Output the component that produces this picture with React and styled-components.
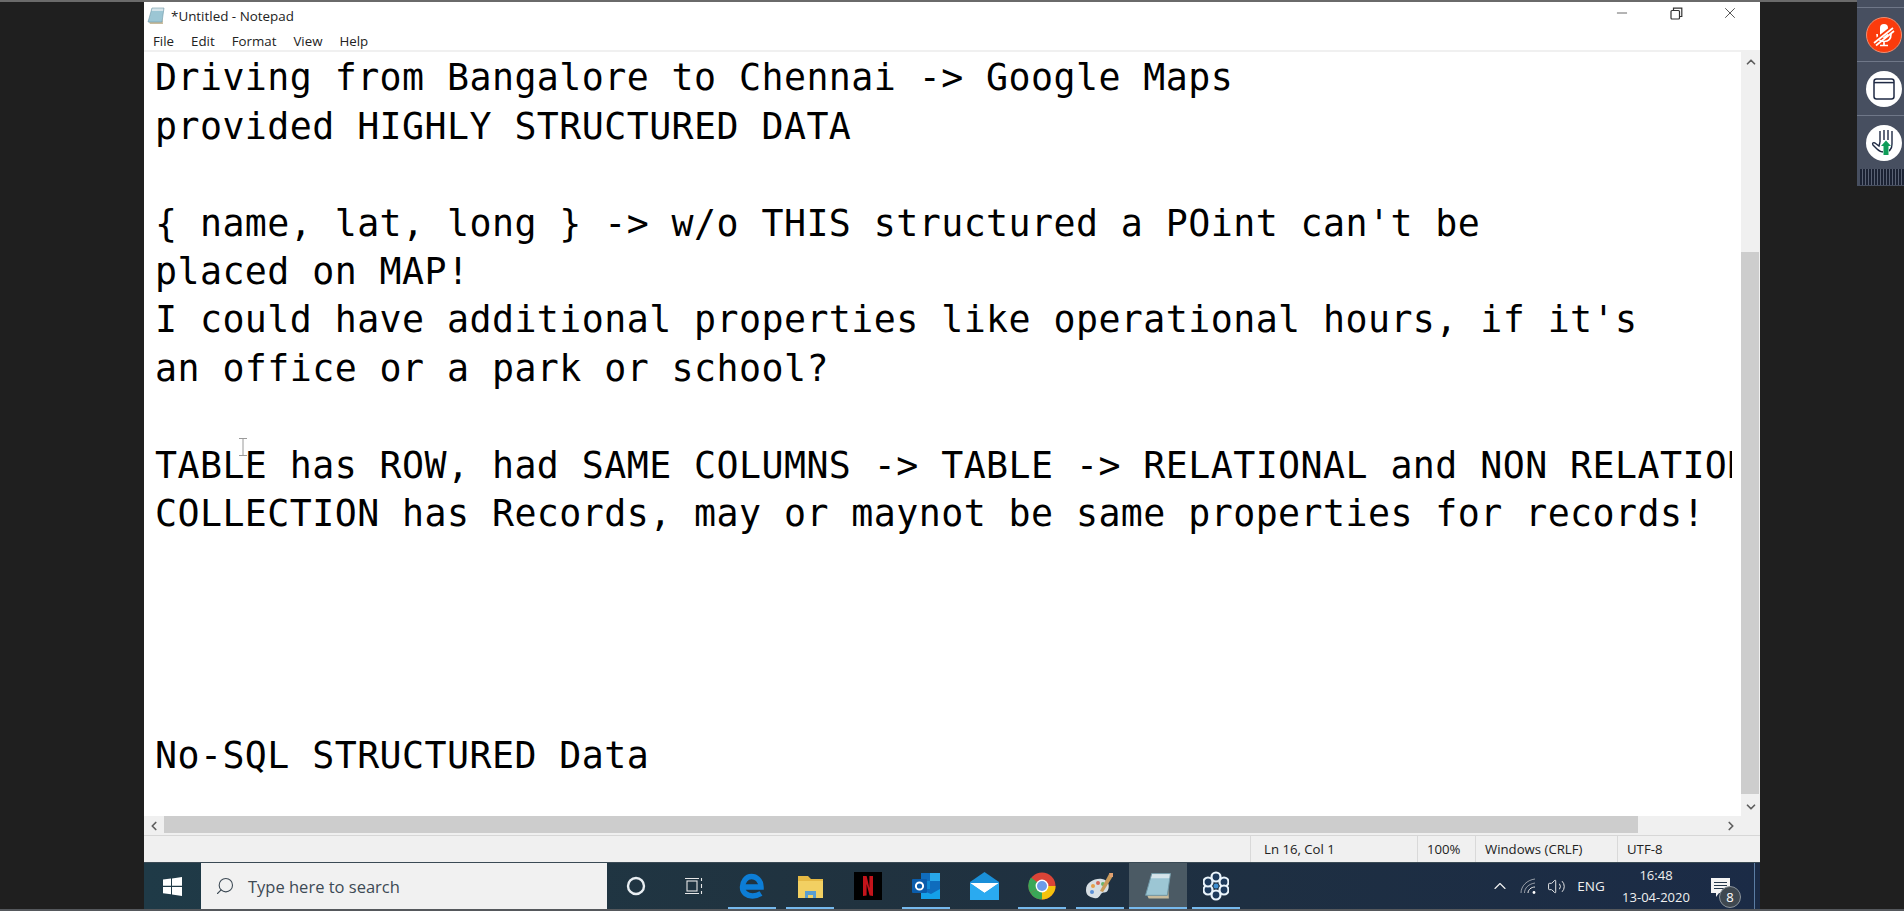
import React from 'react'
import styled, { createGlobalStyle } from 'styled-components'
import { Search, ChevronUp, ChevronDown, ChevronLeft, ChevronRight, Minus, X, Volume2 } from 'lucide-react'

const GlobalStyle = createGlobalStyle`
  html, body { margin: 0; padding: 0; height: 100%; background: #1f1f1f; overflow: hidden; }
  * { box-sizing: border-box; }
`

const Screen = styled.div`
  width: 1904px;
  height: 911px;
  display: flex;
  background: #1f1f1f;
  border-top: 2px solid #6a6a6a;
  border-bottom: 2px solid #55585c;
  padding-left: 144px;
  font-family: "Open Sans", "Noto Sans", sans-serif;
  position: relative;
`

const Monitor = styled.div`
  width: 1616px;
  display: flex;
  flex-direction: column;
`

const Window = styled.div`
  height: 860px;
  display: flex;
  flex-direction: column;
  background: #fff;
`

const TitleBar = styled.div`
  height: 27px;
  display: flex;
  align-items: center;
  padding-left: 3px;
  gap: 6px;
  font-size: 13.4px;
  color: #222;
`

const WindowButtons = styled.div`
  margin-left: auto;
  display: flex;
  align-items: flex-start;
  height: 27px;
  padding-right: 3px;
  color: #444;
`

const WindowButton = styled.div`
  width: 54px;
  height: 22px;
  display: flex;
  align-items: center;
  justify-content: center;
`

const MenuBar = styled.div`
  height: 21px;
  display: flex;
  gap: 17px;
  padding: 3px 0 0 9px;
  align-items: center;
  font-size: 13.3px;
  color: #222;
`

const MenuLabel = styled.span`
  line-height: 16px;
`

const EditorRow = styled.div`
  flex: 1;
  display: flex;
  min-height: 0;
  border-top: 2px solid #f0f0f0;
`

const Editor = styled.div`
  flex: 1;
  min-width: 0;
  overflow: hidden;
  margin-right: 9px;
  padding: 2.4px 0 0 11px;
  position: relative;
`

const Line = styled.div`
  height: 48.4px;
  line-height: 48.4px;
  white-space: pre;
  font-family: "DejaVu Sans Mono", "Liberation Mono", monospace;
  font-size: 36.6px;
  letter-spacing: 0.44px;
  color: #000;
`

const Cursor = styled.svg`
  position: absolute;
  left: 95px;
  top: 386px;
`

const VerticalScroll = styled.div`
  width: 19px;
  display: flex;
  flex-direction: column;
  background: #f0f0f0;
`

const ScrollArrow = styled.div`
  width: ${({ $w }) => $w || 19}px;
  height: 19px;
  flex-shrink: 0;
  display: flex;
  align-items: center;
  justify-content: center;
  color: #5f5f5f;
`

const VThumbTrack = styled.div`
  flex: 1;
  padding-top: 181px;
  display: flex;
`

const VThumb = styled.div`
  width: 18px;
  height: 542px;
  background: #cdcdcd;
`

const HorizontalScroll = styled.div`
  height: 19px;
  display: flex;
  background: #f0f0f0;
`

const HThumbTrack = styled.div`
  flex: 1;
  padding-right: 83px;
  display: flex;
`

const HThumb = styled.div`
  flex: 1;
  height: 17px;
  background: #cdcdcd;
`

const StatusBar = styled.div`
  height: 27px;
  display: flex;
  justify-content: flex-end;
  background: #f0f0f0;
  border-top: 1px solid #d7d7d7;
  font-size: 13.2px;
  color: #222;
`

const StatusCell = styled.div`
  width: ${({ $w }) => $w}px;
  display: flex;
  align-items: center;
  padding-left: ${({ $pad }) => $pad || 9}px;
  border-left: 1px solid #d9d9d9;
  white-space: nowrap;
`

const Taskbar = styled.div`
  height: 47px;
  display: flex;
  align-items: stretch;
  background: linear-gradient(90deg, #1f3a47 0%, #20323f 45%, #1b2b46 100%);
  border-top: 1px solid #3a4a55;
  color: #fff;
`

const StartButton = styled.div`
  width: 57px;
  display: flex;
  align-items: center;
  justify-content: center;
`

const SearchBox = styled.div`
  width: 406px;
  display: flex;
  align-items: center;
  gap: 13px;
  padding-left: 14px;
  background: #f1f1f1;
  color: #3d4a55;
  font-size: 16.5px;
`

const TaskItem = styled.div`
  width: 58px;
  display: flex;
  align-items: center;
  justify-content: center;
  position: relative;
  background: ${({ $active }) => ($active ? '#4b5a64' : 'transparent')};
  &::after {
    content: '';
    display: ${({ $open }) => ($open ? 'block' : 'none')};
    position: absolute;
    left: ${({ $active }) => ($active ? 0 : 5)}px;
    right: ${({ $active }) => ($active ? 0 : 5)}px;
    bottom: 0;
    height: 2px;
    background: #76b9ed;
  }
`

const Tray = styled.div`
  margin-left: auto;
  margin-right: 5px;
  display: flex;
  align-items: center;
  padding-right: 3px;
  border-right: 1px solid #5b7da3;
`

const TrayIcon = styled.div`
  width: ${({ $w }) => $w}px;
  display: flex;
  align-items: center;
  justify-content: center;
  font-size: 13.5px;
  color: #f0f0f0;
`

const Clock = styled.div`
  width: 88px;
  margin-right: 11px;
  display: flex;
  flex-direction: column;
  align-items: center;
  font-size: 13px;
  line-height: 22px;
  color: #f0f0f0;
`

const NoticeBadge = styled.div`
  position: absolute;
  left: 8px;
  top: 20px;
  width: 22px;
  height: 22px;
  border-radius: 50%;
  background: #3f4850;
  border: 1px solid #8c949b;
  display: flex;
  align-items: center;
  justify-content: center;
  font-size: 13px;
  color: #fff;
`

const Notice = styled.div`
  position: relative;
  width: 40px;
  height: 40px;
  display: flex;
  align-items: flex-start;
  padding-top: 12px;
`

const SidePanel = styled.div`
  position: absolute;
  right: 0;
  top: -2px;
  width: 47px;
  height: 186px;
  background: #474f60;
  display: flex;
  flex-direction: column;
  padding-top: 7px;
`

const PanelSlot = styled.div`
  height: 54px;
  border-top: 1px solid #6f7788;
  display: flex;
  align-items: center;
  padding-left: 9px;
`

const PanelButton = styled.div`
  width: 36px;
  height: 36px;
  border-radius: 50%;
  background: ${({ $bg }) => $bg || '#fff'};
  border: ${({ $ring }) => ($ring ? `1px solid ${$ring}` : 'none')};
  display: flex;
  align-items: center;
  justify-content: center;
  color: #fff;
`

const Gripper = styled.div`
  height: 16px;
  margin: 0 0 0 3px;
  background: repeating-linear-gradient(90deg, #1b2233 0 2px, #5a6274 2px 3px);
`

const lines = [
  'Driving from Bangalore to Chennai -> Google Maps',
  'provided HIGHLY STRUCTURED DATA',
  '',
  "{ name, lat, long } -> w/o THIS structured a POint can't be",
  'placed on MAP!',
  "I could have additional properties like operational hours, if it's",
  'an office or a park or school?',
  '',
  'TABLE has ROW, had SAME COLUMNS -> TABLE -> RELATIONAL and NON RELATIONAL',
  'COLLECTION has Records, may or maynot be same properties for records!',
  '',
  '',
  '',
  '',
  'No-SQL STRUCTURED Data',
]

const NotepadIcon = ({ size = 18 }) => (
  <svg width={size} height={size} viewBox="0 0 18 18">
    <path d="M5 1h12l-2 14H1z" fill="#9cc6d4" />
    <path d="M5 1h12l-.4 3H4.400z" fill="#d5e4ea" />
    <path d="M2 15h13l.6-4 .4 6H3z" fill="#c8bb9c" />
    <path d="M5 1h12l-2 14H1z" fill="none" stroke="#6f97a6" strokeWidth=".6" />
  </svg>
)

const RestoreIcon = () => (
  <svg width="13" height="13" viewBox="0 0 13 13" fill="none" stroke="#333" strokeWidth="1.2">
    <rect x="1" y="3.5" width="8.5" height="8.5" rx="1" />
    <path d="M3.5 3.5V1.2h8.3v8.3H9.5" />
  </svg>
)

const WindowsLogo = () => (
  <svg width="19" height="19" viewBox="0 0 19 19" fill="#fff">
    <path d="M0 2.6 8 1.5v7.3H0zM9 1.4 19 0v8.8H9zM0 9.9h8v7.4L0 16.2zM9 9.9h10V19L9 17.5z" />
  </svg>
)

const TaskViewIcon = () => (
  <svg width="20" height="20" viewBox="0 0 20 20" fill="none" stroke="#e8e8e8" strokeWidth="1.1">
    <rect x="3" y="5" width="10" height="10" />
    <path d="M1 2.5h14M1 17.5h14M17.5 2v3M17.5 8v4M17.5 15v3" />
  </svg>
)

const EdgeIcon = () => (
  <svg width="26" height="26" viewBox="0 0 26 26" fill="none" stroke="#0c7dd6" strokeWidth="5.5">
    <path d="M4 14h18C22 7 17 3.5 12.5 3.5 7 3.5 3.5 9 3.5 14c0 6 5 9 10 9 3 0 6-1 8.5-2.5" />
  </svg>
)

const ExplorerIcon = () => (
  <svg width="27" height="27" viewBox="0 0 27 27">
    <path d="M1 3h10l3 3h12v19H1z" fill="#e5b944" />
    <rect x="1" y="8" width="25" height="17" fill="#f2d062" />
    <path d="M8 25v-7h11v7h-3v-3h-5v3z" fill="#5a9ed0" />
  </svg>
)

const NetflixIcon = () => (
  <svg width="28" height="28" viewBox="0 0 28 28">
    <rect width="28" height="28" fill="#000" />
    <path d="M9 4h3.6l2.8 12V4H19v20l-3.4-.6L12.6 12v11.6L9 24z" fill="#c4141b" />
  </svg>
)

const OutlookIcon = () => (
  <svg width="29" height="28" viewBox="0 0 29 28">
    <rect x="9" y="1" width="19" height="26" fill="#0f6cbd" />
    <rect x="18" y="1" width="10" height="8" fill="#28a8ea" />
    <rect x="9" y="9" width="9" height="8" fill="#0f8ad6" />
    <path d="M9 18l10 4 9-5v10H9z" fill="#14a0e8" />
    <rect x="0" y="7" width="15" height="14" rx="1" fill="#0a5cab" />
    <circle cx="7.5" cy="14" r="3.6" fill="none" stroke="#fff" strokeWidth="2" />
  </svg>
)

const MailIcon = () => (
  <svg width="29" height="28" viewBox="0 0 29 28">
    <path d="M0 10 14.5 0 29 10v18H0z" fill="#1a8fd8" />
    <path d="M0 11h29L14.5 21z" fill="#fff" />
    <path d="M0 11l14.5 10L29 11v17H0z" fill="#2aaaf0" />
  </svg>
)

const ChromeIcon = () => (
  <svg width="28" height="28" viewBox="0 0 28 28">
    <circle cx="14" cy="14" r="13.5" fill="#db4437" />
    <path d="M14 14 2.4 21A13.5 13.5 0 0 1 3 5.5z" fill="#3aa757" />
    <path d="M14 14 14 27.5A13.5 13.5 0 0 1 2.4 21z" fill="#3aa757" />
    <path d="M14 14h13.5A13.5 13.5 0 0 1 14 27.5z" fill="#f4c20d" />
    <circle cx="14" cy="14" r="6.4" fill="#fff" />
    <circle cx="14" cy="14" r="5" fill="#6b9be8" />
  </svg>
)

const PaintIcon = () => (
  <svg width="30" height="28" viewBox="0 0 30 28">
    <path d="M1 18C1 10 10 6 17 7c6 1 8 6 6 11-2 4-5 1-7 4s-3 5-7 4c-5-1-8-3-8-8z" fill="#d7dfe4" />
    <circle cx="8" cy="14" r="2" fill="#e5a04a" />
    <circle cx="13" cy="11" r="2" fill="#d66a5a" />
    <circle cx="18" cy="12" r="2" fill="#6bb56a" />
    <circle cx="7" cy="20" r="2" fill="#5a8fd6" />
    <path d="M24 2l4 2-10 16-3-1z" fill="#c99a5a" />
    <path d="M24 1h4v4h-3z" fill="#e0a070" />
  </svg>
)

const FlowerIcon = () => (
  <svg width="26" height="30" viewBox="0 0 26 30" fill="#1d3a5c" stroke="#eaf4fb" strokeWidth="2.2">
    <circle cx="13" cy="6" r="4.5" />
    <circle cx="21" cy="11" r="4.5" />
    <circle cx="21" cy="19" r="4.5" />
    <circle cx="13" cy="24" r="4.5" />
    <circle cx="5" cy="19" r="4.5" />
    <circle cx="5" cy="11" r="4.5" />
    <circle cx="13" cy="15" r="2.5" fill="#3f8fd0" stroke="none" />
  </svg>
)

const WifiIcon = () => (
  <svg width="17" height="17" viewBox="0 0 17 17" fill="none" stroke="#e8e8e8" strokeWidth="1">
    <path d="M1 15C1 8 7 2 15 1" opacity=".6" />
    <path d="M4.5 15c0-5 4-9 10.5-10" opacity=".6" />
    <path d="M8 15c0-3 3-6 7-6" />
    <circle cx="14" cy="14.5" r="1.4" fill="#fff" stroke="none" />
  </svg>
)

const NoticeIcon = () => (
  <svg width="20" height="19" viewBox="0 0 20 19">
    <path d="M0 0h19v15H8l-3 4v-4H0z" fill="#f4f4f4" />
    <path d="M3 4.5h13M3 7.5h13M3 10.5h13" stroke="#26384c" strokeWidth="1.2" />
  </svg>
)

const MicMutedIcon = () => (
  <svg width="26" height="26" viewBox="0 0 26 26" fill="none" stroke="#fff" strokeWidth="1.7">
    <rect x="9" y="2" width="8" height="14" rx="4" fill="#fff" stroke="none" />
    <path d="M6 12c0 5 3 7.5 7 7.5s7-2.5 7-7.5M13 19.5V23M9 23.5h8" />
    <path d="M3 20 22 5" stroke="#fb3b0c" strokeWidth="4" />
    <path d="M3 21 22 6" />
    <path d="M5 23.5 23 9" />
  </svg>
)

const PanelWindowIcon = () => (
  <svg width="22" height="22" viewBox="0 0 22 22" fill="none" stroke="#1f2a44" strokeWidth="1.5">
    <rect x="1" y="1" width="20" height="20" rx="2.5" />
    <path d="M1 4.6h20" />
  </svg>
)

const HandIcon = () => (
  <svg width="26" height="28" viewBox="0 0 26 28">
    <path d="M9 13V2M13 11V1M17 11V1M21 13V2M9 13 8 17 4 14c-2-1-3 .5-2 2l4 4c2 2 4 3 7 3 6 0 8-3 8-8v-2" fill="none" stroke="#1f2a44" strokeWidth="1.4" />
    <path d="M15 11l5.500 6H18v9h-6v-9H9.500z" fill="#fff" />
    <path d="M15 11.500l5 5.500h-2.500v9h-5v-9H10z" fill="#0f9d58" />
  </svg>
)

const App = () => {
  return (
    <Screen>
      <GlobalStyle />
      <Monitor>
        <Window>
          <TitleBar>
            <NotepadIcon />
            <span>*Untitled - Notepad</span>
            <WindowButtons>
              <WindowButton><Minus size={16} strokeWidth={1.2} /></WindowButton>
              <WindowButton><RestoreIcon /></WindowButton>
              <WindowButton><X size={18} strokeWidth={1.2} /></WindowButton>
            </WindowButtons>
          </TitleBar>
          <MenuBar>
            {['File', 'Edit', 'Format', 'View', 'Help'].map((m) => (
              <MenuLabel key={m}>{m}</MenuLabel>
            ))}
          </MenuBar>
          <EditorRow>
            <Editor>
              {lines.map((l, i) => (
                <Line key={i}>{l}</Line>
              ))}
              <Cursor width="8" height="18" viewBox="0 0 8 18" fill="none" stroke="#9a9a9a">
                <path d="M0 .5h8M0 17.5h8M4 .5v17" />
              </Cursor>
            </Editor>
            <VerticalScroll>
              <ScrollArrow><ChevronUp size={14} strokeWidth={3} /></ScrollArrow>
              <VThumbTrack><VThumb /></VThumbTrack>
              <ScrollArrow><ChevronDown size={14} strokeWidth={3} /></ScrollArrow>
            </VerticalScroll>
          </EditorRow>
          <HorizontalScroll>
            <ScrollArrow $w={20}><ChevronLeft size={14} strokeWidth={3} /></ScrollArrow>
            <HThumbTrack><HThumb /></HThumbTrack>
            <ScrollArrow $w={20}><ChevronRight size={14} strokeWidth={3} /></ScrollArrow>
            <ScrollArrow $w={19} />
          </HorizontalScroll>
          <StatusBar>
            <StatusCell $w={167} $pad={13}>Ln 16, Col 1</StatusCell>
            <StatusCell $w={58}>100%</StatusCell>
            <StatusCell $w={142}>Windows (CRLF)</StatusCell>
            <StatusCell $w={143}>UTF-8</StatusCell>
          </StatusBar>
        </Window>
        <Taskbar>
          <StartButton><WindowsLogo /></StartButton>
          <SearchBox>
            <Search size={20} strokeWidth={1.3} style={{ transform: 'scaleX(-1)' }} />
            <span>Type here to search</span>
          </SearchBox>
          <TaskItem>
            <svg width="20" height="20" viewBox="0 0 20 20" fill="none" stroke="#e8eef2" strokeWidth="2.4">
              <circle cx="10" cy="10" r="8" />
            </svg>
          </TaskItem>
          <TaskItem><TaskViewIcon /></TaskItem>
          <TaskItem $open><EdgeIcon /></TaskItem>
          <TaskItem $open><ExplorerIcon /></TaskItem>
          <TaskItem><NetflixIcon /></TaskItem>
          <TaskItem $open><OutlookIcon /></TaskItem>
          <TaskItem><MailIcon /></TaskItem>
          <TaskItem $open><ChromeIcon /></TaskItem>
          <TaskItem $open><PaintIcon /></TaskItem>
          <TaskItem $open $active><NotepadIcon size={28} /></TaskItem>
          <TaskItem $open><FlowerIcon /></TaskItem>
          <Tray>
            <TrayIcon $w={28}><ChevronUp size={20} strokeWidth={1.4} /></TrayIcon>
            <TrayIcon $w={28}><WifiIcon /></TrayIcon>
            <TrayIcon $w={28}><Volume2 size={19} strokeWidth={1.2} /></TrayIcon>
            <TrayIcon $w={42}>ENG</TrayIcon>
            <Clock>
              <span>16:48</span>
              <span>13-04-2020</span>
            </Clock>
            <Notice>
              <NoticeIcon />
              <NoticeBadge>8</NoticeBadge>
            </Notice>
          </Tray>
        </Taskbar>
      </Monitor>
      <SidePanel>
        <PanelSlot>
          <PanelButton $bg="#fb3b0c" $ring="#f08d70"><MicMutedIcon /></PanelButton>
        </PanelSlot>
        <PanelSlot>
          <PanelButton><PanelWindowIcon /></PanelButton>
        </PanelSlot>
        <PanelSlot>
          <PanelButton><HandIcon /></PanelButton>
        </PanelSlot>
        <Gripper />
      </SidePanel>
    </Screen>
  )
}

export default App
